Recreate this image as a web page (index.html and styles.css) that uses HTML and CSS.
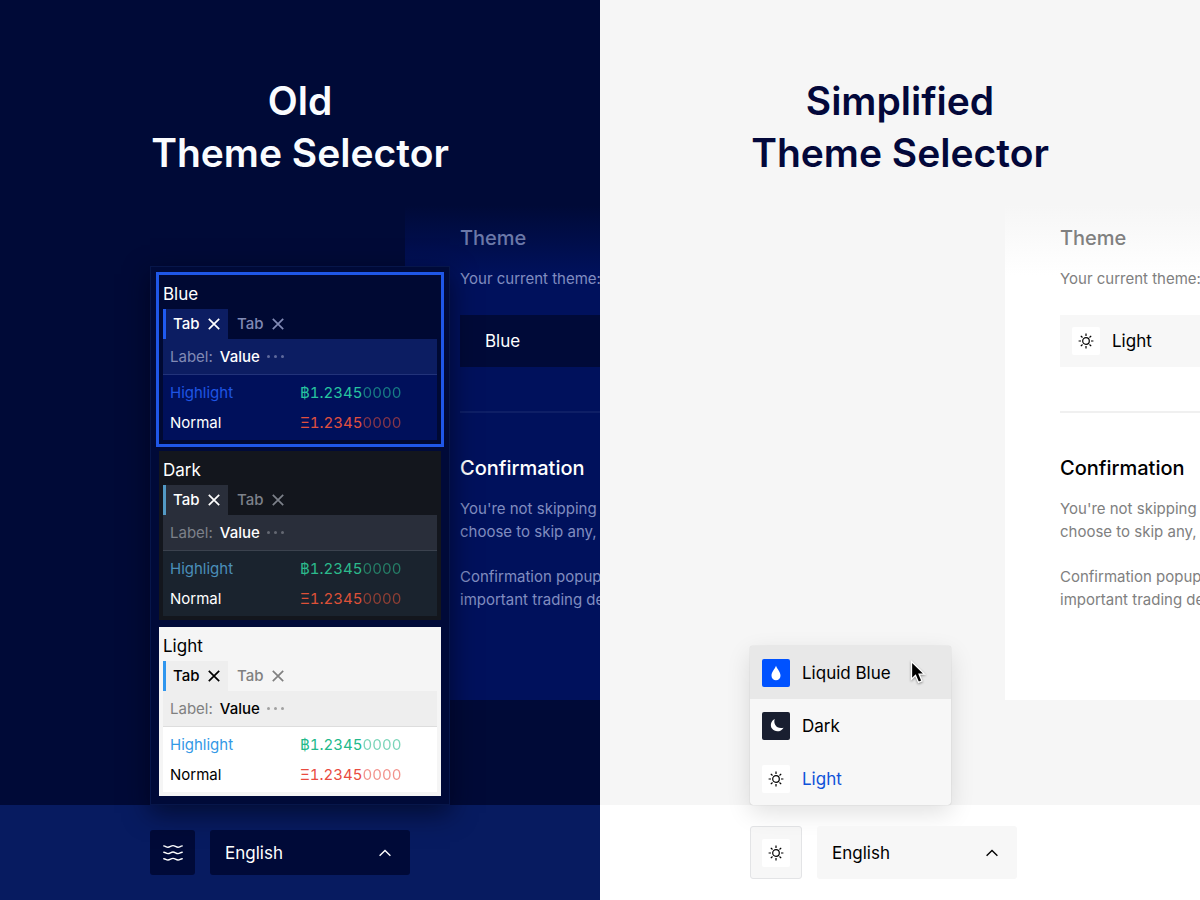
FILE: index.html
```html
<!DOCTYPE html>
<html lang="en">
<head>
<meta charset="utf-8">
<meta name="viewport" content="width=device-width, initial-scale=1">
<title>Theme Selector</title>
<link rel="stylesheet" href="styles.css">
</head>
<body>
<svg class="defs" aria-hidden="true">
  <symbol id="sun" viewBox="0 0 16 16"><g fill="none" stroke="currentColor" stroke-width="1.2"><circle cx="8" cy="8" r="3.300"/><path d="M8 .6v2.400M8 13v2.400M.6 8h2.400M13 8h2.400M2.800 2.800l1.700 1.700M11.500 11.500l1.700 1.700M2.800 13.200l1.700-1.700M11.500 4.500l1.700-1.700"/></g></symbol>
  <symbol id="drop" viewBox="0 0 16 16"><path fill="currentColor" d="M8 .8C6.900 4 3.500 7.200 3.500 10.700a4.500 4.500 0 0 0 9 0C12.500 7.200 9.100 4 8 .8z"/></symbol>
  <symbol id="moon" viewBox="0 0 16 16"><path fill="currentColor" d="M6.800.9C3 2.600 1.800 7.400 4 10.600c2.900 4 9 3.600 11.600-.9-3.600 1-7-.1-8.400-2.900C6.100 4.800 6.100 2.600 6.800.9z"/></symbol>
  <symbol id="waves" viewBox="0 0 20 18"><path fill="none" stroke="currentColor" stroke-width="1.400" stroke-linecap="round" d="M.8 1.900C2.600 1.900 3 3.200 5 3.200S8 1.600 10 1.600s3 1.600 5 1.600 2.400-1.300 4.200-1.300M.8 8.300c1.800 0 2.200 1.300 4.200 1.300s3-1.600 5-1.600 3 1.600 5 1.600 2.400-1.300 4.200-1.300M.8 14.700c1.800 0 2.200 1.300 4.200 1.300s3-1.600 5-1.600 3 1.600 5 1.600 2.400-1.300 4.200-1.300"/></symbol>
  <symbol id="chevron" viewBox="0 0 12 8"><path fill="none" stroke="currentColor" stroke-width="1.400" d="M.6 6.700L6 1.500l5.400 5.200"/></symbol>
  <symbol id="cross" viewBox="0 0 12 12"><path fill="none" stroke="currentColor" stroke-width="1.700" d="M.8.8l10.400 10.400M11.200.8L.8 11.200"/></symbol>
</svg>
<main class="compare">
  <section class="half half-old">
    <div class="stage">
      <h1 class="title">Old<br>Theme Selector</h1>
      <div class="panel">
        <h2 class="panel-title faded">Theme</h2>
        <p class="text">Your current theme:</p>
        <div class="field">
          <select class="field-select" aria-label="Theme"><option>Blue</option></select>
        </div>
        <hr class="rule">
        <h2 class="panel-title">Confirmation</h2>
        <p class="text">You're not skipping<br>choose to skip any,</p>
        <p class="text">Confirmation popups<br>important trading details</p>
      </div>
    </div>
    <footer class="bar">
      <div class="popup previews">
        <button class="card card-blue selected" type="button">
          <span class="card-name">Blue</span>
          <span class="tabs"><span class="tab active">Tab <svg class="cross"><use href="#cross"/></svg></span><span class="tab">Tab <svg class="cross"><use href="#cross"/></svg></span></span>
          <span class="label-row"><span class="muted">Label:</span><span class="value">Value</span><span class="dots"><i></i><i></i><i></i></span></span>
          <span class="rows"><span class="highlight">Highlight</span><span class="up">฿1.2345<span class="dim">0000</span></span><span>Normal</span><span class="down">Ξ1.2345<span class="dim">0000</span></span></span>
        </button>
        <button class="card card-dark" type="button">
          <span class="card-name">Dark</span>
          <span class="tabs"><span class="tab active">Tab <svg class="cross"><use href="#cross"/></svg></span><span class="tab">Tab <svg class="cross"><use href="#cross"/></svg></span></span>
          <span class="label-row"><span class="muted">Label:</span><span class="value">Value</span><span class="dots"><i></i><i></i><i></i></span></span>
          <span class="rows"><span class="highlight">Highlight</span><span class="up">฿1.2345<span class="dim">0000</span></span><span>Normal</span><span class="down">Ξ1.2345<span class="dim">0000</span></span></span>
        </button>
        <button class="card card-light" type="button">
          <span class="card-name">Light</span>
          <span class="tabs"><span class="tab active">Tab <svg class="cross"><use href="#cross"/></svg></span><span class="tab">Tab <svg class="cross"><use href="#cross"/></svg></span></span>
          <span class="label-row"><span class="muted">Label:</span><span class="value">Value</span><span class="dots"><i></i><i></i><i></i></span></span>
          <span class="rows"><span class="highlight">Highlight</span><span class="up">฿1.2345<span class="dim">0000</span></span><span>Normal</span><span class="down">Ξ1.2345<span class="dim">0000</span></span></span>
        </button>
      </div>
      <button class="icon-button" type="button" aria-label="Select theme"><svg class="waves"><use href="#waves"/></svg></button>
      <div class="language">
        <select class="language-select" aria-label="Language"><option>English</option></select>
        <svg class="chevron"><use href="#chevron"/></svg>
      </div>
    </footer>
  </section>
  <section class="half half-new">
    <div class="stage">
      <h1 class="title">Simplified<br>Theme Selector</h1>
      <div class="panel">
        <h2 class="panel-title faded">Theme</h2>
        <p class="text">Your current theme:</p>
        <div class="field">
          <span class="tile tile-light"><svg class="glyph"><use href="#sun"/></svg></span>
          <select class="field-select" aria-label="Theme"><option>Light</option></select>
        </div>
        <hr class="rule">
        <h2 class="panel-title">Confirmation</h2>
        <p class="text">You're not skipping<br>choose to skip any,</p>
        <p class="text">Confirmation popups<br>important trading details</p>
      </div>
    </div>
    <footer class="bar">
      <div class="popup menu">
        <button class="item hovered" type="button"><span class="tile tile-blue"><svg class="glyph"><use href="#drop"/></svg></span>Liquid Blue
          <svg class="cursor" viewBox="0 0 16 26" aria-hidden="true"><path d="M1.500 1.500v17.700l4-3.800 3 7 3.500-1.500-2.900-6.800h5.300z" fill="#000" stroke="#fff" stroke-width="1.300"/></svg></button>
        <button class="item" type="button"><span class="tile tile-dark"><svg class="glyph"><use href="#moon"/></svg></span>Dark</button>
        <button class="item current" type="button"><span class="tile tile-light"><svg class="glyph"><use href="#sun"/></svg></span>Light</button>
      </div>
      <button class="icon-button" type="button" aria-label="Select theme"><span class="tile tile-light"><svg class="glyph"><use href="#sun"/></svg></span></button>
      <div class="language">
        <select class="language-select" aria-label="Language"><option>English</option></select>
        <svg class="chevron"><use href="#chevron"/></svg>
      </div>
    </footer>
  </section>
</main>
</body>
</html>
```
FILE: styles.css
```css
* { box-sizing: border-box; }
body { margin: 0; font-family: Inter, "Liberation Sans", sans-serif; }
button, select { font: inherit; color: inherit; border: 0; padding: 0; margin: 0; background: none; appearance: none; text-align: left; }
.defs { position: absolute; width: 0; height: 0; }

.compare { display: grid; grid-template-columns: 1fr 1fr; min-height: 100vh; }
.half { display: flex; flex-direction: column; min-width: 0; overflow: hidden; background: var(--bg); color: var(--ink); }
.half-old { --bg: #000a37; --panel: #00115c; --bar: #071b60; --field: #000a38; --line: #0e1f66; --ink: #fff; --muted: #808dc0; --faded: #6b78a8; }
.half-new { --bg: #f6f6f6; --panel: #fff; --bar: #fff; --field: #f7f7f7; --line: #f0f0f0; --ink: #000; --muted: #808080; --faded: #808080; }

.stage { flex: 1; display: flex; flex-direction: column; padding-bottom: 105px; }
.title { margin: 0; padding-top: 75px; font-size: 39px; line-height: 52px; font-weight: 600; text-align: center; color: var(--title); }
.half-old { --title: #fafcff; }
.half-new { --title: #03083a; }
.panel { flex: 1; margin: 26px 0 0 405px; padding: 20px 0 0 55px; overflow: hidden; white-space: nowrap; background: linear-gradient(var(--bg), var(--panel) 70px); }
.panel-title { margin: 0 0 16px; font-size: 20px; line-height: 26px; font-weight: 500; }
.faded { color: var(--faded); }
.text { margin: 0 0 22px; font-size: 15px; line-height: 23px; color: var(--muted); }
.field { display: flex; align-items: center; gap: 12px; height: 52px; padding-left: 12px; margin-top: 25px; background: var(--field); font-size: 17px; }
.half-old .field { padding-left: 25px; }
.field-select { flex: 1; height: 52px; }
.rule { height: 2px; margin: 44px 0 42px; border: 0; background: var(--line); }

.bar { position: relative; display: flex; align-items: flex-start; gap: 15px; height: 95px; padding: 25px 0 0 150px; background: var(--bar); font-size: 17px; }
.half-new .bar { padding-top: 21px; }
.icon-button { display: flex; align-items: center; justify-content: center; width: 45px; height: 45px; border-radius: 3px; background: var(--field); }
.half-new .icon-button { width: 52px; height: 53px; border: 1px solid #e3e4e6; }
.waves { width: 20px; height: 18px; }
.language { position: relative; width: 200px; border-radius: 3px; background: var(--field); }
.language-select { width: 100%; height: 45px; padding-left: 15px; }
.half-new .language-select { height: 53px; }
.chevron { position: absolute; right: 19px; top: 50%; width: 12px; height: 8px; margin-top: -4px; pointer-events: none; }

.popup { position: absolute; left: 150px; bottom: 100%; }
.previews { display: grid; gap: 7px; width: 300px; padding: 8px; border: 1px solid #07164a; background: #000a38; box-shadow: 0 8px 24px rgba(0, 3, 20, .6); }
.card { display: block; padding: 4px; background: var(--card-bg); color: var(--card-ink); font-size: 15px; line-height: 30px; }
.selected { box-shadow: 0 0 0 3px #1f57e7; }
.card-name { display: block; font-size: 17px; }
.tabs { display: flex; height: 30px; }
.tab { display: flex; align-items: center; gap: 9px; width: 65px; padding-left: 9px; font-weight: 500; color: var(--card-muted); }
.tab.active { padding-left: 7px; border-left: 3px solid var(--accent); background: var(--strip); color: var(--card-ink); }
.cross { width: 12px; height: 12px; flex: none; }
.label-row { display: flex; align-items: center; gap: 7px; height: 36px; padding-left: 7px; background: var(--strip); border-bottom: 1px solid var(--card-line); }
.muted { color: var(--card-muted); }
.value { font-weight: 500; }
.dots { display: flex; gap: 4px; }
.dots i { width: 3px; height: 3px; border-radius: 2px; background: var(--card-muted); opacity: .7; }
.rows { display: grid; grid-template-columns: 130px 1fr; padding: 3px 0 2px 7px; background: var(--body); }
.highlight { color: var(--hl); }
.up, .down { font-variant-numeric: tabular-nums; }
.up { color: var(--up); }
.down { color: var(--down); }
.dim { opacity: .6; }
.card-blue { --card-bg: #000933; --card-ink: #fff; --card-muted: #818ab5; --strip: #0c1d62; --card-line: #22337a; --body: #00105b; --accent: #1f5af0; --hl: #1f55e4; --up: #27c4a0; --down: #e0503f; }
.card-dark { --card-bg: #13161d; --card-ink: #fff; --card-muted: #7d818a; --strip: #292e3a; --card-line: #3b424e; --body: #1a232e; --accent: #5299c4; --hl: #4b8fba; --up: #2cba8c; --down: #dd5138; }
.card-light { --card-bg: #f5f5f5; --card-ink: #000; --card-muted: #808080; --strip: #eee; --card-line: #ddd; --body: #fff; --accent: #2f96ee; --hl: #3399e6; --up: #22b98a; --down: #e94b40; }

.menu { width: 201px; border-radius: 3px; background: #f7f7f7; box-shadow: 0 0 1px rgba(0, 0, 0, .3), 0 8px 24px rgba(0, 0, 0, .12); }
.item { position: relative; display: flex; align-items: center; gap: 12px; width: 100%; height: 53px; padding-left: 12px; }
.hovered { border-radius: 3px 3px 0 0; background: #e8e8e8; }
.current { color: #0f52d9; }
.tile { display: flex; align-items: center; justify-content: center; flex: none; width: 28px; height: 28px; border-radius: 2px; }
.tile-blue { background: #0052ff; color: #fff; }
.tile-dark { background: #191f30; color: #fff; }
.tile-light { background: #fff; color: #000; }
.glyph { width: 16px; height: 16px; }
.cursor { position: absolute; left: 160px; top: 14px; width: 16px; height: 26px; filter: drop-shadow(0 1px 1px rgba(0, 0, 0, .4)); }
```
